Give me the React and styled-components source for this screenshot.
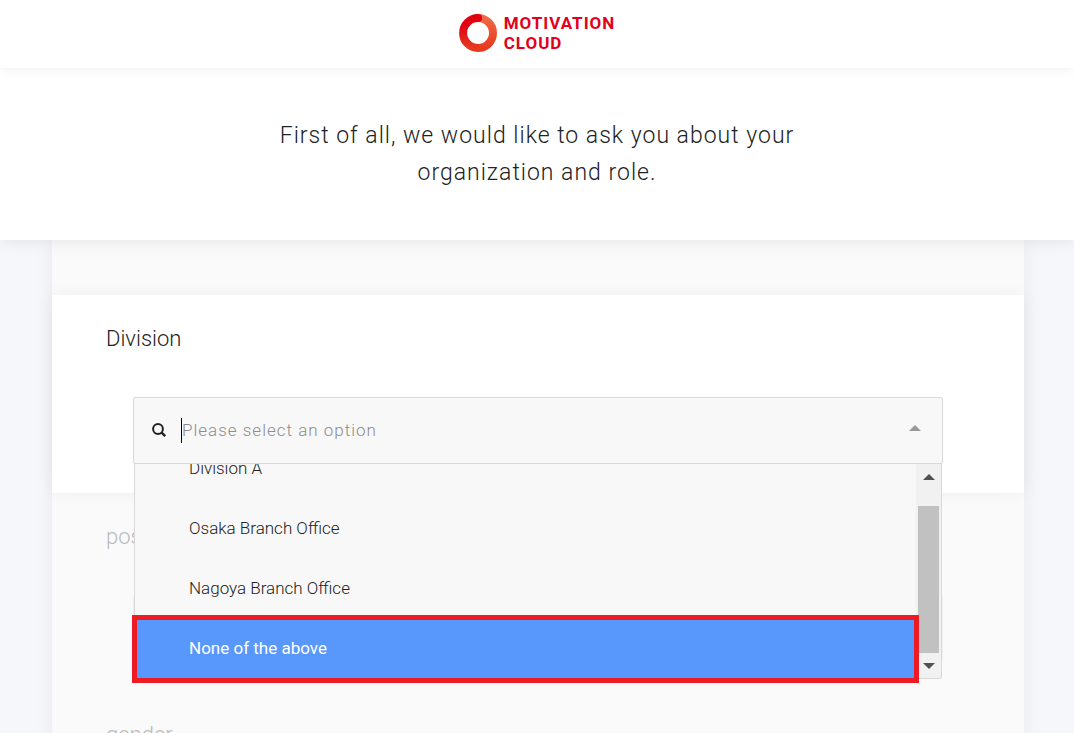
import React, { useState } from 'react';
import styled, { createGlobalStyle, css } from 'styled-components';

const divisions = ['Division A', 'Osaka Branch Office', 'Nagoya Branch Office', 'None of the above'];

const Logo = () => (
    <LogoLink href="#" aria-label="Motivation Cloud">
        <svg width="38" height="38" viewBox="0 0 38 38" fill="none" strokeWidth="8">
            <defs>
                <linearGradient id="ringLeft" x1="0" y1="0" x2="0" y2="1">
                    <stop offset="0.2" stopColor="#df0011" />
                    <stop offset="1" stopColor="#e73820" />
                </linearGradient>
                <linearGradient id="ringRight" x1="0" y1="0" x2="0" y2="1">
                    <stop offset="0" stopColor="#ee6a43" />
                    <stop offset="1" stopColor="#e73820" />
                </linearGradient>
            </defs>
            <path d="M19 4a15 15 0 0 1 0 30" stroke="url(#ringRight)" />
            <path d="M19.2 34a15 15 0 0 1 -0.2 -30" stroke="url(#ringLeft)" />
            <circle cx="19" cy="4" r="4" fill="#df0011" stroke="none" />
        </svg>
        <LogoText>
            MOTIVATION
            <br />
            CLOUD
        </LogoText>
    </LogoLink>
);

const SearchIcon = () => (
    <svg width="14" height="14" viewBox="0 0 14 14" fill="none" stroke="#222" strokeWidth="2">
        <circle cx="6" cy="6" r="4.9" />
        <path d="M9.4 9.4L13.2 13.2" strokeWidth="2.4" />
    </svg>
);

const Triangle = ({ down, color }) => (
    <svg width="12" height="6" viewBox="0 0 12 6" fill={color}>
        <path d={down ? 'M0 0H12L6 6Z' : 'M0 6H12L6 0Z'} />
    </svg>
);

const DivisionSelect = () => {
    const [query, setQuery] = useState('');
    const [selected, setSelected] = useState('None of the above');

    return (
        <SelectWrap>
            <Control>
                <SearchIcon />
                <Field>
                    <Caret />
                    <SearchInput
                        id="division"
                        type="text"
                        placeholder="Please select an option"
                        value={query}
                        onChange={(e) => setQuery(e.target.value)}
                    />
                </Field>
                <Toggle type="button" aria-label="Close options">
                    <Triangle color="#999" />
                </Toggle>
            </Control>
            <Menu>
                <Options role="listbox" aria-label="Division">
                    {divisions.map((name) => (
                        <Option
                            key={name}
                            type="button"
                            role="option"
                            aria-selected={name === selected}
                            $active={name === selected}
                            onClick={() => setSelected(name)}
                        >
                            {name}
                        </Option>
                    ))}
                </Options>
                <Scrollbar>
                    <ScrollArrow type="button" aria-label="Scroll up">
                        <Triangle color="#505050" />
                    </ScrollArrow>
                    <Thumb />
                    <ScrollArrow type="button" aria-label="Scroll down">
                        <Triangle down color="#505050" />
                    </ScrollArrow>
                </Scrollbar>
                <Highlight />
            </Menu>
        </SelectWrap>
    );
};

export default function App() {
    return (
        <Page>
            <GlobalStyle />
            <Header>
                <Logo />
            </Header>
            <Intro>
                <IntroText>First of all, we would like to ask you about your organization and role.</IntroText>
            </Intro>
            <Main>
                <Card>
                    <Previous />
                    <Question $active>
                        <Label htmlFor="division">Division</Label>
                        <DivisionSelect />
                    </Question>
                    <Question>
                        <Label htmlFor="position">position</Label>
                        <SelectWrap>
                            <Control>
                                <SearchInput id="position" type="text" disabled />
                            </Control>
                        </SelectWrap>
                    </Question>
                    <Question>
                        <Label as="p">gender</Label>
                    </Question>
                </Card>
            </Main>
        </Page>
    );
}


/*
    STYLING
*/

const red = '#e3001b';
const fontColor = '#222';
const line = '#d9d9d9';

const GlobalStyle = createGlobalStyle`
    * {
        box-sizing: border-box;
    }

    body {
        margin: 0;
        color: ${fontColor};
        font-family: Roboto, 'Liberation Sans', sans-serif;
        font-weight: 300;
    }

    button, input {
        font: inherit;
        color: inherit;
        border: 0;
        padding: 0;
        background: none;
    }
`;

const Page = styled.div`
    display: flex;
    flex-direction: column;
    height: 100vh;
    overflow: hidden;
    background: #f5f7fb;
`;

const Header = styled.header`
    display: flex;
    flex-shrink: 0;
    align-items: flex-start;
    justify-content: center;
    height: 68px;
    padding-top: 14px;
    background: #fff;
    box-shadow: 0 0 12px rgba(0, 0, 0, 0.08);
    z-index: 3;
`;

const LogoLink = styled.a`
    display: flex;
    align-items: center;
    gap: 7px;
    height: 38px;
    color: ${red};
    text-decoration: none;
`;

const LogoText = styled.span`
    font-size: 17px;
    font-weight: 700;
    line-height: 20px;
    letter-spacing: 1px;
`;

const Intro = styled.section`
    display: flex;
    flex-shrink: 0;
    justify-content: center;
    padding: 49px 24px;
    background: #fff;
    box-shadow: 0 0 16px rgba(0, 0, 0, 0.1);
    z-index: 2;
`;

const IntroText = styled.h1`
    max-width: 540px;
    margin: 0;
    font-size: 23px;
    font-weight: 300;
    line-height: 37px;
    letter-spacing: 1px;
    text-align: center;
`;

const Main = styled.main`
    flex: 1;
    min-height: 0;
    padding: 0 50px 0 52px;
`;

const Card = styled.form`
    min-height: 100%;
    background: #fafafa;
    box-shadow: 0 0 20px rgba(0, 0, 0, 0.06);
`;

const Previous = styled.div`
    height: 55px;
`;

const Question = styled.section`
    height: 198px;
    padding: 28px 54px 0;

    ${({ $active }) => $active ? css`
        position: relative;
        z-index: 1;
        background: #fff;
        box-shadow: 0 0 16px rgba(0, 0, 0, 0.05);
    ` : css`
        & > * {
            opacity: 0.3;
        }
    `}
`;

const Label = styled.label`
    display: block;
    margin: 0;
    font-size: 22px;
    line-height: 32px;
`;

const SelectWrap = styled.div`
    position: relative;
    margin: 42px 27px 0;
`;

const Control = styled.div`
    display: flex;
    align-items: center;
    height: 67px;
    padding: 0 20px 1px 18px;
    background: #f8f8f8;
    border: 1px solid ${line};
    border-radius: 2px;
`;

const Field = styled.div`
    display: flex;
    flex: 1;
    align-items: center;
    margin-left: 15px;
`;

const Caret = styled.span`
    width: 1px;
    height: 25px;
    background: #000;
`;

const SearchInput = styled.input`
    flex: 1;
    height: 30px;
    font-size: 17px;
    letter-spacing: 1px;
    outline: none;

    &::placeholder {
        color: #8c8c8c;
        opacity: 1;
    }
`;

const Toggle = styled.button`
    display: flex;
    padding: 6px 1px 10px;
    cursor: pointer;
`;

const Menu = styled.div`
    position: absolute;
    top: 66px;
    left: 1px;
    right: 1px;
    display: flex;
    height: 216px;
    background: #f8f8f8;
    border: 1px solid ${line};
    border-radius: 0 0 2px 2px;
`;

const Options = styled.div`
    display: flex;
    flex: 1;
    flex-direction: column;
    justify-content: flex-end;
    overflow: hidden;
`;

const Option = styled.button`
    flex-shrink: 0;
    height: 60px;
    padding: 0 54px;
    font-size: 17px;
    text-align: left;
    cursor: pointer;

    ${({ $active }) => $active && css`
        color: #fff;
        font-weight: 400;
        background: #5897fb;
    `}
`;

const Scrollbar = styled.div`
    display: flex;
    flex-direction: column;
    width: 25px;
    padding: 0 2px;
    background: #f1f1f1;
`;

const ScrollArrow = styled.button`
    display: flex;
    flex: 0 0 25px;
    align-items: center;
    justify-content: center;

    &:first-child {
        margin-bottom: 17px;
    }
`;

const Thumb = styled.div`
    flex: 1;
    background: #c1c1c1;
`;

const Highlight = styled.div`
    position: absolute;
    left: -3px;
    right: 22px;
    bottom: -5px;
    height: 68px;
    border: 5px solid #ed1c24;
    pointer-events: none;
`;
